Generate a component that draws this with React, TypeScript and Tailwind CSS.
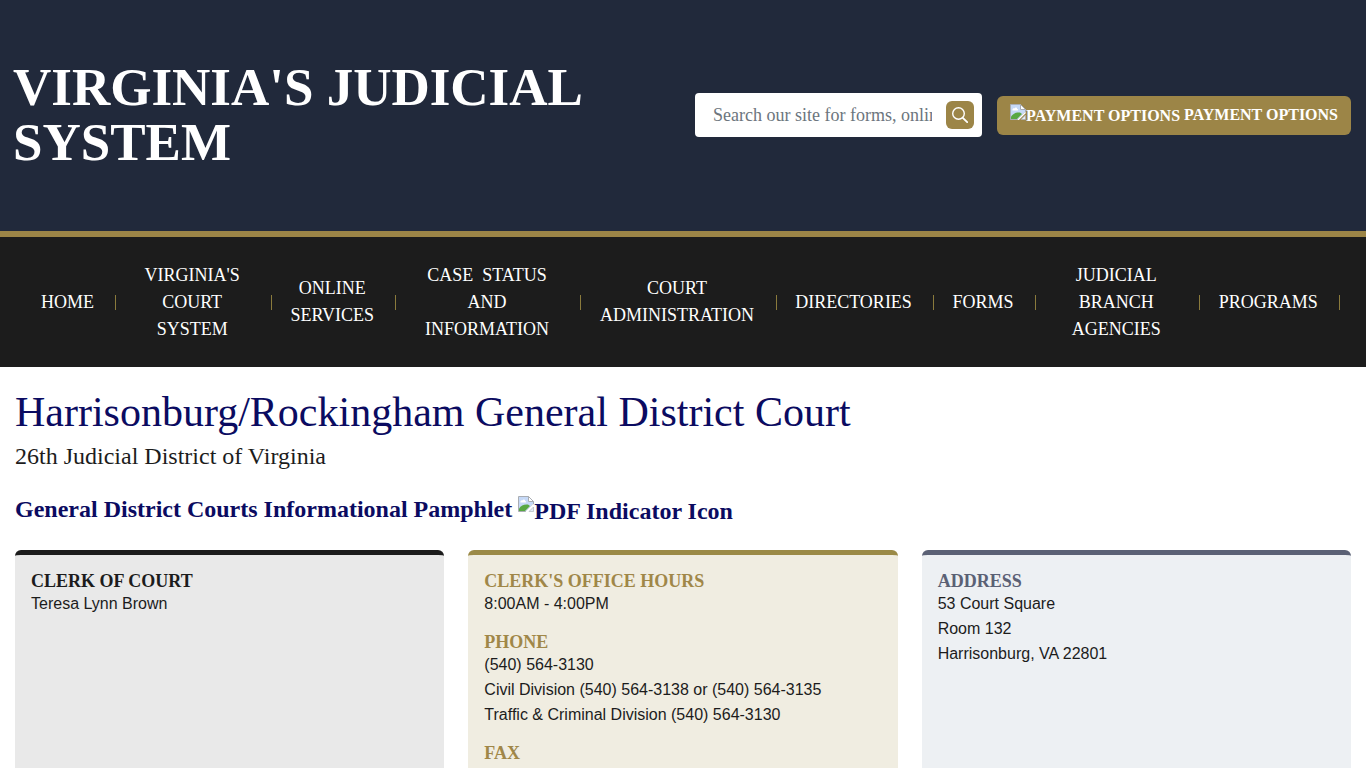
import { useState } from "react"

const navItems = [
  { label: "Home", href: "#home", width: "" },
  { label: "Virginia's Court System", href: "#courts", width: "w-[115px]" },
  { label: "Online Services", href: "#online", width: "w-[84px]" },
  { label: "Case\u00a0 Status and Information", href: "#cases", width: "w-[144px]" },
  { label: "Court Administration", href: "#administration", width: "w-[155px]" },
  { label: "Directories", href: "#directories", width: "" },
  { label: "Forms", href: "#forms", width: "" },
  { label: "Judicial Branch Agencies", href: "#agencies", width: "w-[124px]" },
  { label: "Programs", href: "#programs", width: "" },
]

const cards = [
  {
    box: "border-[#1c1c1c] bg-[#e9e9e9]",
    heading: "text-[#1c1c1c]",
    sections: [{ title: "Clerk of Court", lines: ["Teresa Lynn Brown"] }],
  },
  {
    box: "border-[#9b8a47] bg-[#f0ede1]",
    heading: "text-[#a08748]",
    sections: [
      { title: "Clerk's Office Hours", lines: ["8:00AM - 4:00PM"] },
      {
        title: "Phone",
        lines: [
          "(540) 564-3130",
          "Civil Division (540) 564-3138 or (540) 564-3135",
          "Traffic & Criminal Division (540) 564-3130",
        ],
      },
      { title: "Fax", lines: [] },
    ],
  },
  {
    box: "border-[#5b6175] bg-[#edf0f3]",
    heading: "text-[#5b6175]",
    sections: [
      {
        title: "Address",
        lines: ["53 Court Square", "Room 132", "Harrisonburg, VA 22801"],
      },
    ],
  },
]

function BrokenImage() {
  return (
    <svg width="16" height="16" viewBox="0 0 16 16" className="shrink-0" aria-hidden="true">
      <path d="M.5 .5H10.5L15.5 5.5V8L8 15.5H.5Z" fill="#c6d9f7" stroke="#a9adb3" />
      <path d="M1 15V12.5C3 9.5 6 8 10 8.5L12 10L7 15Z" fill="#58a843" />
      <path d="M2.5 6.5C2 5 3.5 4 4.5 4.5C5 3 7.5 3.5 7 5C8.5 5 8.5 6.5 7.5 6.5Z" fill="#fff" />
      <path d="M10.5 .5V5.5H15.5Z" fill="#fff" stroke="#a9adb3" />
      <path d="M15.5 8.5L8 16" stroke="#fff" strokeWidth="1.2" />
      <path d="M15.5 11V15.5H11Z" fill="#e4ecf8" stroke="#a9adb3" strokeWidth=".6" />
    </svg>
  )
}

export default function App() {
  const [query, setQuery] = useState("")

  return (
    <div className="flex min-h-screen flex-col bg-white font-['Liberation_Serif',serif] text-[#1c1c1c]">
      <header className="flex items-center justify-between border-b-6 border-[#9c8547] bg-[#21293b] pt-[60px] pb-[61px] pr-[15px] pl-[13px]">
        <a href="#home" className="w-[620px] text-[53px] leading-[55px] font-bold text-white uppercase">
          Virginia's Judicial System
        </a>

        <div className="flex items-center gap-[15px]">
          <form
            onSubmit={(e) => e.preventDefault()}
            className="flex h-11 w-[287px] items-center rounded bg-white pr-2 pl-[18px]"
          >
            <input
              type="text"
              aria-label="Search our site"
              placeholder="Search our site for forms, online services"
              value={query}
              onChange={(e) => setQuery(e.target.value)}
              className="mr-3.5 min-w-0 flex-1 text-lg outline-none placeholder:text-[#6c757d]"
            />
            <button
              type="submit"
              aria-label="Search"
              className="flex size-7 items-center justify-center rounded-md bg-[#9c8547] text-white"
            >
              <svg width="16" height="16" viewBox="0 0 16 16" fill="none" stroke="currentColor" strokeWidth="1.4">
                <circle cx="6.5" cy="6.5" r="5.8" />
                <path d="M10.8 10.8L15.2 15.2" strokeWidth="1.8" strokeLinecap="round" />
              </svg>
            </button>
          </form>

          <a
            href="#payment"
            className="flex h-[39px] items-center gap-1 rounded-md bg-[#9c8547] px-[13px] text-base font-bold whitespace-nowrap text-white uppercase"
          >
            <span className="flex items-start pt-0.5">
              <BrokenImage />
              Payment Options
            </span>
            <span>Payment Options</span>
          </a>
        </div>
      </header>

      {/* Main nav */}
      <nav className="bg-[#1c1c1c] py-6 pr-[26px] pl-[41px]">
        <ul className="flex min-h-[82px] items-center justify-between">
          {navItems.map((item) => (
            <li key={item.label} className="flex items-center gap-[21px]">
              <a
                href={item.href}
                className={`block text-center text-lg leading-[27px] text-white uppercase ${item.width}`}
              >
                {item.label}
              </a>
              <span className="h-[15px] w-px bg-[#8a7a3c]" />
            </li>
          ))}
        </ul>
      </nav>

      <main className="flex flex-1 flex-col px-[15px] pt-5">
        <h1 className="text-[42px] leading-[50px] text-[#0b0b61]">
          Harrisonburg/Rockingham General District Court
        </h1>
        <p className="text-2xl leading-[38px]">26th Judicial District of Virginia</p>

        <a
          href="#pamphlet"
          className="mt-[17px] flex items-center gap-1.5 self-start text-2xl leading-[30px] font-bold text-[#0b0b61]"
        >
          <span>General District Courts Informational Pamphlet</span>
          <span className="flex pt-1">
            <BrokenImage />
            PDF Indicator Icon
          </span>
        </a>

        <div className="mt-6 grid flex-1 grid-cols-3 gap-6">
          {cards.map((card, i) => (
            <section key={i} className={`flex flex-col gap-4 rounded-t-md border-t-5 px-4 pt-4 ${card.box}`}>
              {card.sections.map((section) => (
                <div key={section.title}>
                  <h2 className={`text-lg leading-5 font-bold uppercase ${card.heading}`}>{section.title}</h2>
                  {section.lines.map((line) => (
                    <p key={line} className="font-['Liberation_Sans',sans-serif] text-base leading-[25px]">
                      {line}
                    </p>
                  ))}
                </div>
              ))}
            </section>
          ))}
        </div>
      </main>
    </div>
  )
}
